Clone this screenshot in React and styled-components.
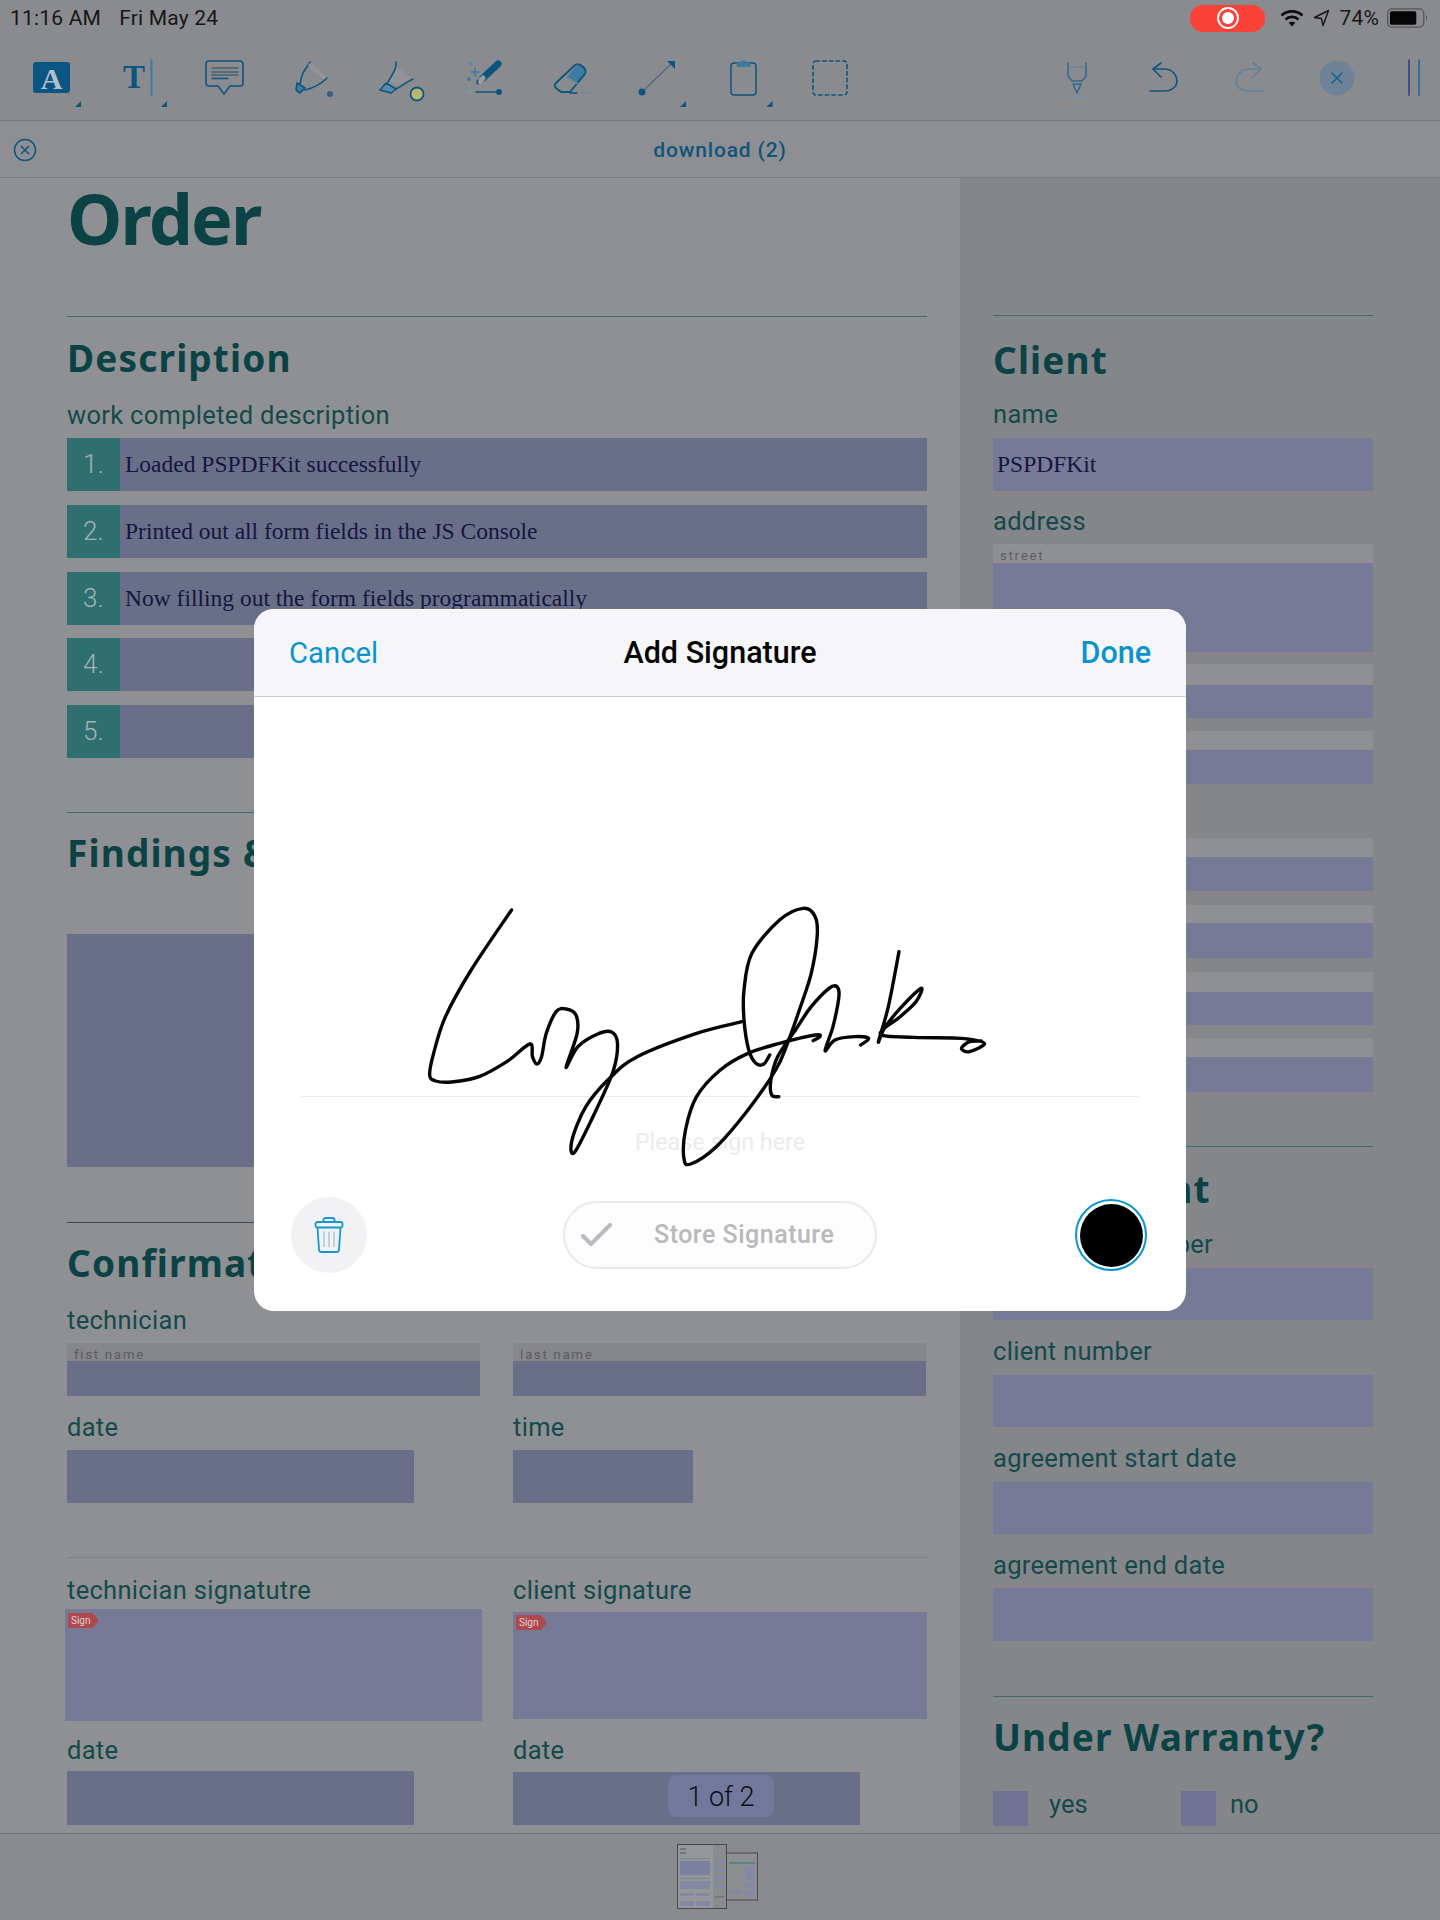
import React from 'react';
import styled, { createGlobalStyle } from 'styled-components';

const SANS = '"Roboto", "Liberation Sans", sans-serif';
const BOLD = '"Noto Sans", "Roboto", sans-serif';
const SERIF = '"Liberation Serif", serif';
const ICON = '#0c5680';
const HEAD = '#0b4345';
const LABEL = '#144a4c';

const Global = createGlobalStyle`
  html, body { margin: 0; padding: 0; background: #8f9093; font-family: ${SANS}; }
  * { box-sizing: border-box; }
`;

const Page = styled.div`
  position: relative; width: 1440px; height: 1920px; overflow: hidden;
  display: flex; flex-direction: column; background: #8f9093;
`;
const Header = styled.header`
  background: #8a8b8f; border-bottom: 1px solid #77787b; height: 121px; flex: none;
  position: relative; z-index: 1;
`;
const StatusBar = styled.div`
  height: 36px; display: flex; justify-content: space-between; align-items: center;
  padding: 0 12px 0 10px; font-size: 21px; color: #161618; letter-spacing: 0.2px;
`;
const StatusGroup = styled.div`display: flex; align-items: center; gap: ${p => p.$gap ?? 18}px;`;
const RecordPill = styled.div`
  width: 75px; height: 27px; margin-right: 15px; border-radius: 13px; background: #fa4238;
  display: flex; align-items: center; justify-content: center;
`;
const LocationSlot = styled.span`display: flex; margin-left: 9px;`;
const BatteryText = styled.span`font-size: 21px; margin: 0 8px 0 9px;`;

const Toolbar = styled.div`
  height: 84px; display: flex; justify-content: space-between; padding: 0 0 0 8px;
`;
const ToolGroup = styled.div`display: flex;`;
const Tool = styled.div`
  position: relative; width: ${p => p.$w || 86.5}px; height: 84px; flex: none;
  display: flex; align-items: center; justify-content: center;
  svg { overflow: visible; }
`;
const Corner = styled.span`
  position: absolute; left: ${p => p.$x}px; top: 65px; width: 6px; height: 6px;
  background: ${ICON}; clip-path: polygon(100% 0, 100% 100%, 0 100%);
`;

const TitleBar = styled.div`
  height: 57px; flex: none; background: #8e8f93; border-bottom: 1px solid #7b7c80;
  display: flex; align-items: center; justify-content: center; position: relative;
  color: #0f5479; font-size: 21px; font-weight: 500; letter-spacing: 0.85px; padding-top: 2px;
`;
const TitleClose = styled.span`position: absolute; left: 13px; top: 17px; display: flex;`;

const Doc = styled.main`height: 1655px; flex: none; display: flex;`;
const LeftCol = styled.section`width: 960px; padding: 0 33px 0 67px;`;
const RightCol = styled.section`width: 480px; background: #85868a; padding: 137px 67px 0 33px;`;

const Title = styled.h1`
  margin: 0; font: 700 70px/80px ${BOLD}; color: ${HEAD}; letter-spacing: -1.8px;
`;
const Rule = styled.hr`
  border: 0; height: 1px; margin: ${p => p.$mt}px 0 0;
  background: ${p => p.$c || '#43696b'};
`;
const Heading = styled.h2`
  margin: ${p => p.$mt - 1}px 0 0; padding-bottom: 1px; font: 700 37px/44px ${BOLD}; color: ${HEAD};
  letter-spacing: ${p => p.$ls ?? 1.15}px; white-space: nowrap;
`;
const Label = styled.div`
  margin-top: ${p => p.$mt}px; font: 400 25.5px/30px ${SANS}; color: ${LABEL}; white-space: nowrap;
  letter-spacing: 0.3px;
`;
const Rows = styled.div`display: flex; flex-direction: column; gap: 13.75px; margin-top: 8px;`;
const Row = styled.div`display: flex; height: 53px; background: #6a6f89;`;
const Num = styled.div`
  width: 53px; flex: none; background: #306f70; color: #a3b4b4; font: 300 26px/53px ${SANS};
  padding-left: 16px;
`;
const SerifText = styled.div`
  font: 400 23.5px/53px ${SERIF}; color: #14163e; padding-left: ${p => p.$pl || 5}px; white-space: nowrap;
`;
const Field = styled.div`
  height: ${p => p.$h}px; width: ${p => (p.$w ? p.$w + 'px' : 'auto')};
  margin-top: ${p => p.$mt || 0}px; background: ${p => p.$bg || '#6a6f89'};
`;
const Band = styled.div`
  height: ${p => p.$h}px; margin-top: ${p => p.$mt || 0}px; background: ${p => p.$bg};
  font: 400 13.5px/${p => p.$h + p.$drop}px ${SANS}; letter-spacing: 1.6px; color: #5c5d60; padding-left: 7px;
`;
const Cols = styled.div`
  display: grid; grid-template-columns: 413px 413px; column-gap: 33px; align-items: start;
`;
const SigBox = styled.div`
  position: relative; background: #767a96;
  height: ${p => p.$h}px; margin-top: ${p => p.$mt}px; margin-left: ${p => p.$ml || 0}px;
  width: ${p => p.$w}px;
`;
const SignTag = styled.span`
  position: absolute; left: ${p => p.$l}px; top: ${p => p.$t}px; width: 31px; height: 15px;
  background: #ae4a4e; color: #dccfd2; font: 400 10px/15px ${SANS}; padding-left: 3px;
  clip-path: polygon(0 0, 80% 0, 100% 50%, 80% 100%, 0 100%);
`;
const PageLabel = styled.div`
  position: absolute; left: 668px; top: 1775px; width: 106px; height: 42px; border-radius: 8px;
  background: #72789b; color: #0c0d14; font: 300 27px/44px ${SANS}; text-align: center;
`;
const Options = styled.div`display: flex; align-items: flex-start; margin-top: 31px;`;
const CheckBox = styled.div`width: 35px; height: 35px; background: #6f7391; flex: none;`;
const OptText = styled.span`
  font: 400 25.5px/30px ${SANS}; color: ${LABEL}; margin: -2px 0 0 ${p => p.$ml}px; width: ${p => p.$w}px;
`;

const BottomBar = styled.footer`
  flex: 1; background: #8a8b8e; border-top: 1px solid #727376; position: relative;
  display: flex; justify-content: center; padding-top: 10px; padding-right: 5px;
`;

const Modal = styled.div`
  position: absolute; left: 254px; top: 609px; width: 932px; height: 702px;
  border-radius: 20px; background: #fff; overflow: hidden; display: flex; flex-direction: column;
`;
const ModalHead = styled.div`
  height: 88px; flex: none; background: #f6f6f8; border-bottom: 1px solid #c9c9cc;
  display: flex; align-items: center; justify-content: space-between; padding: 0 35px;
  position: relative;
`;
const HeadButton = styled.span`
  font: ${p => (p.$bold ? 500 : 400)} ${p => (p.$bold ? 30.5 : 29.3)}px/34px ${SANS}; color: #0a93cd;
`;
const ModalTitle = styled.span`
  position: absolute; left: 0; right: 0; text-align: center;
  font: 500 30.5px/34px ${SANS}; color: #050505;
`;
const Canvas = styled.div`position: relative; height: 483px; flex: none; padding: 399px 47px 0;`;
const SignLine = styled.div`height: 1px; background: #ececef;`;
const Hint = styled.div`
  margin-top: 30px; text-align: center; font: 400 23.3px/30px ${SANS}; color: #ebebee;
`;
const Signature = styled.svg`position: absolute; left: 146px; top: 183px; overflow: visible;`;
const ModalFoot = styled.div`
  height: 110px; flex: none; display: flex; align-items: center; justify-content: space-between;
  padding: 0 39px 0 37px;
`;
const TrashBtn = styled.button`
  width: 76px; height: 76px; border-radius: 50%; background: #f2f2f4; border: 0; padding: 0;
  display: flex; align-items: center; justify-content: center;
`;
const StoreBtn = styled.button`
  width: 314px; height: 68px; margin-right: 2px; border-radius: 34px; background: #fdfcfe; border: 2px solid #e9e9eb;
  display: flex; align-items: center; padding: 0 0 0 16px; gap: 41px;
  font: 500 25px/30px ${SANS}; color: #b9b9bc; letter-spacing: 0.5px;
`;
const Swatch = styled.div`
  width: 72px; height: 72px; border-radius: 50%; border: 2px solid #0a95cf; background: #fff;
  display: flex; align-items: center; justify-content: center;
`;
const SwatchInner = styled.div`width: 63px; height: 63px; border-radius: 50%; background: #000;`;

/* smooth path through points */
const smooth = pts => {
  let d = `M${pts[0][0]} ${pts[0][1]}`;
  for (let i = 0; i < pts.length - 1; i++) {
    const p0 = pts[i - 1] || pts[i], p1 = pts[i], p2 = pts[i + 1], p3 = pts[i + 2] || p2;
    const c1 = [p1[0] + (p2[0] - p0[0]) / 6, p1[1] + (p2[1] - p0[1]) / 6];
    const c2 = [p2[0] - (p3[0] - p1[0]) / 6, p2[1] - (p3[1] - p1[1]) / 6];
    d += ` C${c1[0].toFixed(1)} ${c1[1].toFixed(1)} ${c2[0].toFixed(1)} ${c2[1].toFixed(1)} ${p2[0]} ${p2[1]}`;
  }
  return d;
};
const STROKES = [
  [[282,90],[180,270],[115,410],[85,520],[75,585],[90,603],[130,606],[200,590],[270,545],[328,492],[335,530],[346,552],[358,530],[370,460],[395,395],[420,387],[445,405],[448,460],[420,562],[450,500],[500,462],[535,456],[550,490],[540,570],[500,680],[442,816],[435,780],[470,680],[530,595],[600,530],[750,460],[865,425]],
  [[935,525],[920,552],[900,550],[882,510],[870,420],[870,330],[890,220],[960,120],[1020,85],[1050,110],[1055,170],[1040,280],[1010,390],[980,490],[950,570],[880,690],[800,800],[735,852],[718,835],[722,750],[750,650],[810,570],[880,520],[960,490],[1050,465],[1062,470],[1045,482]],
  [[1000,450],[1040,380],[1085,325],[1105,320],[1110,350],[1095,440],[1075,512],[1100,480],[1150,470],[1185,475],[1165,495]],
  [[1000,450],[955,530],[938,600],[940,645],[958,650]],
  [[1262,215],[1235,380],[1210,485],[1225,445],[1265,385],[1318,325],[1305,365],[1265,410],[1215,462],[1300,472],[1420,475],[1478,490],[1440,515],[1420,505],[1440,485],[1470,483]],
];

const Svg = ({ children, w = 50, h = 50 }) => (
  <svg width={w} height={h} viewBox={`0 0 ${w} ${h}`} fill="none" stroke={ICON} strokeWidth="1.6" strokeLinecap="round" strokeLinejoin="round">{children}</svg>
);

const IconA = () => (
  <Svg>
    <rect x="7" y="9" width="37" height="31" rx="3" fill="#0a5582" stroke="none" />
    <text x="25.5" y="36" textAnchor="middle" fontFamily="Liberation Serif" fontWeight="700" fontSize="30" fill="#b0c0ca" stroke="none">A</text>
  </Svg>
);
const IconT = () => (
  <Svg>
    <text x="21" y="35" textAnchor="middle" fontFamily="Liberation Serif" fontWeight="700" fontSize="33" fill="#0a5582" stroke="none">T</text>
    <path d="M38.5 7V42" stroke="#3f7a9e" strokeWidth="2" />
  </Svg>
);
const IconComment = () => (
  <Svg>
    <path d="M10 8H41a3 3 0 0 1 3 3V30a3 3 0 0 1-3 3H31L25 41L19 33H10a3 3 0 0 1-3-3V11a3 3 0 0 1 3-3Z" />
    <path d="M13 15H39M13 19H39M13 22H39" stroke="#44606f" strokeWidth="1.3" />
    <path d="M13 25.5H29" strokeWidth="1.3" />
  </Svg>
);
const IconInk = () => (
  <Svg>
    <path d="M24 9L17 20C15 24 15 27 14 31" />
    <path d="M41 25C36 30 28 35 19 37" />
    <path d="M24 12L38 24" stroke="#9a9ca3" strokeWidth="4" opacity="0.6" />
    <path d="M11 30L19 35L14 40L10 37Z" fill="#3f7a9e" />
    <circle cx="44" cy="41" r="3" fill="#1c6490" stroke="none" />
    <circle cx="44" cy="41" r="1.2" fill="#b3404c" stroke="none" />
  </Svg>
);
const IconHighlighter = () => (
  <Svg>
    <path d="M26 32L41 26L24 13L16 27Z" fill="#9a9ca3" opacity="0.5" stroke="none" />
    <path d="M24 9C25 14 22 19 16 29" />
    <path d="M41 26C34 29 32 32 24 36" />
    <path d="M8 37L14 30L24 36L19 40Z" fill="#5a8ca9" />
    <circle cx="45" cy="41" r="6.5" fill="#bcb56e" strokeWidth="1.8" />
  </Svg>
);
const IconMagic = () => (
  <Svg>
    <path d="M39 11L24 25" stroke="#0a5582" strokeWidth="7" />
    <path d="M24 25L20 29" stroke="#9a9ca3" strokeWidth="5" />
    <path d="M19 31a3 3 0 0 1 0-4" />
    <circle cx="12" cy="11" r="2" fill="#5a8ca9" stroke="none" />
    <path d="M16 15V23M12 19H20" stroke="#3f7a9e" strokeWidth="1.6" />
    <circle cx="10" cy="26" r="2" fill="#3f7a9e" stroke="none" />
    <circle cx="11" cy="39" r="3" fill="#7c94a8" stroke="none" />
    <path d="M17 39H37" />
    <circle cx="40" cy="39" r="3" fill="#0a5582" stroke="none" />
  </Svg>
);
const IconEraser = () => (
  <Svg>
    <path d="M22 24L31 13C33 11 35 11 37 13L40 16C41 18 41 19 40 21L33 31Z" fill="#3d7ba0" stroke="none" />
    <path d="M30 12C33 10 35 11 38 14L40 16C41 18 41 19 40 21L25 39H16L11 35C9 33 9 32 11 30Z" strokeWidth="1.9" />
    <path d="M22 24L33 31" stroke="#6d8698" />
    <path d="M25 40H32" strokeWidth="1.6" />
    <path d="M37 40H39M43 40H45" stroke="#6d8698" />
  </Svg>
);
const IconLine = () => (
  <Svg>
    <path d="M13 36L39 11" stroke="#4f6d83" strokeWidth="1.5" />
    <circle cx="10" cy="39" r="3.5" fill="#0a5582" stroke="none" />
    <path d="M35 8H43V16Z" fill="#0a5582" stroke="none" />
  </Svg>
);
const IconClip = () => (
  <Svg>
    <rect x="13" y="10" width="25" height="32" rx="3" strokeWidth="1.5" />
    <path d="M19 13V10H23C23 7 28 7 28 10H32V13Z" fill="#3f7a9e" stroke="#3f7a9e" strokeWidth="1" />
  </Svg>
);
const IconSelect = () => (
  <Svg><rect x="8" y="8" width="34" height="34" rx="3" strokeDasharray="3.5 3.2" /></Svg>
);
const IconStylus = () => (
  <Svg>
    <path d="M16 10V22C16 25 19 26 20 28H30C31 26 34 25 34 22V10" stroke="#2f6a8c" />
    <path d="M16 14H34" stroke="#5f7f94" strokeWidth="1" />
    <path d="M21 31H29L25 40Z" stroke="#2f6a8c" />
    <path d="M15 44H35" stroke="#7c94a8" strokeWidth="1.5" />
  </Svg>
);
const IconUndo = () => (
  <Svg>
    <path d="M22 10L14 16L22 24" />
    <path d="M14 16H25C35 16 38 24 38 28C38 35 31 38 26 38H11" />
  </Svg>
);
const IconRedo = () => (
  <Svg>
    <g stroke="#5f8097">
      <path d="M28 10L36 16L28 24" />
      <path d="M36 16H25C15 16 11 24 11 28C11 35 18 38 24 38H38" />
    </g>
  </Svg>
);
const IconClose = () => (
  <Svg>
    <circle cx="25" cy="25" r="17.5" fill="#6f8398" stroke="none" />
    <path d="M20 20L30 30M30 20L20 30" stroke="#15628f" strokeWidth="1.5" />
  </Svg>
);
const IconToggle = () => (
  <Svg>
    <path d="M24 7V42" stroke="#39438a" strokeWidth="1.7" />
    <path d="M34 7V42" stroke="#1a6f9c" strokeWidth="1.7" />
  </Svg>
);
const CircleX = () => (
  <svg width="24" height="24" viewBox="0 0 24 24" fill="none" stroke={ICON} strokeWidth="1.5">
    <circle cx="12" cy="12" r="10.5" />
    <path d="M8 8L16 16M16 8L8 16" />
  </svg>
);
const RecordIcon = () => (
  <svg width="24" height="24" viewBox="0 0 24 24">
    <circle cx="12" cy="12" r="10" fill="none" stroke="#fff" strokeWidth="1.8" />
    <circle cx="12" cy="12" r="6" fill="#fff" />
  </svg>
);
const Wifi = () => (
  <svg width="24" height="18" viewBox="0 0 24 18" fill="none" stroke="#0c0c0e" strokeWidth="2.6">
    <path d="M1.500 6.500C7 1 17 1 22.500 6.500" />
    <path d="M5.500 10.500C9 7 15 7 18.500 10.500" />
    <path d="M12 17.500L8.700 13.800C10.500 12.300 13.500 12.300 15.300 13.800Z" fill="#0c0c0e" stroke="none" />
  </svg>
);
const Location = () => (
  <svg width="17" height="18" viewBox="0 0 17 18" fill="none" stroke="#161618" strokeWidth="1.4" strokeLinejoin="round">
    <path d="M15.500 1.500L1.500 8.500L8.500 9.500L10 16.500Z" />
  </svg>
);
const Battery = () => (
  <svg width="41" height="20" viewBox="0 0 42 20">
    <rect x="0.700" y="0.700" width="37" height="18.600" rx="4.500" fill="none" stroke="#55565a" strokeWidth="1.300" />
    <rect x="3" y="3" width="27" height="14" rx="2" fill="#050505" />
    <path d="M40 7C41.400 7.600 41.400 12.400 40 13Z" fill="#55565a" />
  </svg>
);
const Trash = () => (
  <svg width="30" height="36" viewBox="0 0 30 36" fill="none" stroke="#1a96cf" strokeWidth="1.800" strokeLinejoin="round">
    <path d="M9.500 5V3C9.500 1.600 10.500 1 11.500 1H18.500C19.500 1 20.500 1.600 20.500 3V5" />
    <rect x="1.500" y="5" width="27" height="5.500" rx="2" />
    <path d="M3.500 10.500L5 32.500C5 34 6 35 7.500 35H22.500C24 35 25 34 25 32.500L26.500 10.500" />
    <path d="M10 14.500V30M15 14.500V30M20 14.500V30" stroke="#a9c9da" strokeWidth="1.500" />
  </svg>
);
const Check = () => (
  <svg width="32" height="24" viewBox="0 0 32 24" fill="none" stroke="#bbbbbe" strokeWidth="4" strokeLinecap="round" strokeLinejoin="round">
    <path d="M2 13L10 21L29 2" />
  </svg>
);
const Thumb = () => (
  <svg width="81" height="65" viewBox="0 0 81 65">
    <rect x="49" y="9" width="31.500" height="47" fill="#8d8e92" stroke="#48494d" />
    <rect x="52" y="18" width="26" height="2" fill="#5f8280" />
    <rect x="68" y="22" width="10" height="14" fill="#8388a4" />
    <rect x="68" y="38" width="10" height="6" fill="#8388a4" />
    <rect x="68" y="46" width="10" height="6" fill="#8388a4" />
    <rect x="52" y="46" width="12" height="3" fill="#8388a4" />
    <rect x="0.500" y="0.500" width="49" height="64" fill="#96979a" stroke="#48494d" />
    <rect x="36" y="1" width="13" height="63" fill="#8b8c90" />
    <rect x="3" y="4" width="6" height="2" fill="#76777b" />
    <rect x="3" y="8" width="6" height="2" fill="#76777b" />
    <rect x="3" y="14" width="30" height="1" fill="#7a8a8a" />
    <rect x="3" y="17" width="30" height="14" fill="#7b80a0" />
    <rect x="3" y="34" width="30" height="1" fill="#7a8a8a" />
    <rect x="3" y="37" width="30" height="8" fill="#8388a4" />
    <rect x="3" y="49" width="14" height="3" fill="#8388a4" />
    <rect x="19" y="49" width="14" height="3" fill="#8388a4" />
    <rect x="3" y="57" width="14" height="5" fill="#8388a4" />
    <rect x="19" y="57" width="14" height="5" fill="#8388a4" />
    <rect x="38" y="16" width="9" height="4" fill="#8388a4" />
    <rect x="38" y="24" width="9" height="4" fill="#8388a4" />
    <rect x="38" y="32" width="9" height="4" fill="#8388a4" />
    <rect x="38" y="40" width="9" height="4" fill="#8388a4" />
    <rect x="38" y="52" width="9" height="2" fill="#76777b" />
  </svg>
);

const Lb = '#86878a';
const Rb = '#8f9093';
const Rf = '#767a96';

export default function App() {
  return (
    <Page>
      <Global />
      <Header>
        <StatusBar>
          <StatusGroup>
            <span>11:16 AM</span>
            <span>Fri May 24</span>
          </StatusGroup>
          <StatusGroup $gap={0}>
            <RecordPill><RecordIcon /></RecordPill>
            <Wifi />
            <LocationSlot><Location /></LocationSlot>
            <BatteryText>74%</BatteryText>
            <Battery />
          </StatusGroup>
        </StatusBar>
        <Toolbar>
          <ToolGroup>
            <Tool><IconA /><Corner $x={67} /></Tool>
            <Tool><IconT /><Corner $x={66.5} /></Tool>
            <Tool><IconComment /></Tool>
            <Tool><IconInk /></Tool>
            <Tool><IconHighlighter /></Tool>
            <Tool><IconMagic /></Tool>
            <Tool><IconEraser /></Tool>
            <Tool><IconLine /><Corner $x={66.5} /></Tool>
            <Tool><IconClip /><Corner $x={66.5} /></Tool>
            <Tool><IconSelect /></Tool>
          </ToolGroup>
          <ToolGroup>
            <Tool><IconStylus /></Tool>
            <Tool><IconUndo /></Tool>
            <Tool><IconRedo /></Tool>
            <Tool><IconClose /></Tool>
            <Tool $w={60}><IconToggle /></Tool>
          </ToolGroup>
        </Toolbar>
      </Header>
      <TitleBar>
        <TitleClose><CircleX /></TitleClose>
        download (2)
      </TitleBar>
      <Doc>
        <LeftCol>
          <Title>Order</Title>
          <Rule $mt={58} />
          <Heading $mt={20}>Description</Heading>
          <Label $mt={19}>work completed description</Label>
          <Rows>
            <Row><Num>1.</Num><SerifText>Loaded PSPDFKit successfully</SerifText></Row>
            <Row><Num>2.</Num><SerifText>Printed out all form fields in the JS Console</SerifText></Row>
            <Row><Num>3.</Num><SerifText>Now filling out the form fields programmatically</SerifText></Row>
            <Row><Num>4.</Num></Row>
            <Row><Num>5.</Num></Row>
          </Rows>
          <Rule $mt={54} />
          <Heading $mt={19}>Findings &amp; Recommendations</Heading>
          <Field $h={233} $mt={58} />
          <Rule $mt={55} $c="#3e4b4d" />
          <Heading $mt={19}>Confirmation</Heading>
          <Label $mt={19}>technician</Label>
          <Cols>
            <div>
              <Band $h={18} $mt={8} $bg={Lb} $drop={5}>fist name</Band>
              <Field $h={35} />
              <Label $mt={16}>date</Label>
              <Field $h={53} $w={347} $mt={8} />
            </div>
            <div>
              <Band $h={18} $mt={8} $bg={Lb} $drop={5}>last name</Band>
              <Field $h={35} />
              <Label $mt={16}>time</Label>
              <Field $h={53} $w={180} $mt={8} />
            </div>
          </Cols>
          <Rule $mt={54} $c="#808386" />
          <Cols>
            <div>
              <Label $mt={17}>technician signatutre</Label>
              <SigBox $h={112} $mt={4} $ml={-2} $w={417}><SignTag $l={3} $t={4}>Sign</SignTag></SigBox>
              <Label $mt={14}>date</Label>
              <Field $h={54} $w={347} $mt={6} />
            </div>
            <div>
              <Label $mt={17}>client signature</Label>
              <SigBox $h={107} $mt={7} $w={414}><SignTag $l={3} $t={3}>Sign</SignTag></SigBox>
              <Label $mt={16}>date</Label>
              <Field $h={53} $w={347} $mt={7} />
            </div>
          </Cols>
        </LeftCol>
        <RightCol>
          <Rule $mt={0} />
          <Heading $mt={23}>Client</Heading>
          <Label $mt={16}>name</Label>
          <Field $h={53} $mt={9} $bg={Rf}><SerifText $pl={4}>PSPDFKit</SerifText></Field>
          <Label $mt={15}>address</Label>
          <Band $h={19} $mt={8} $bg={Rb} $drop={3}>street</Band>
          <Field $h={89} $bg={Rf} />
          <Band $h={21} $mt={12} $bg={Rb} $drop={0} />
          <Field $h={33} $bg={Rf} />
          <Band $h={19} $mt={13} $bg={Rb} $drop={0} />
          <Field $h={34} $bg={Rf} />
          <Band $h={19} $mt={54} $bg={Rb} $drop={0} />
          <Field $h={34} $bg={Rf} />
          <Band $h={18} $mt={14} $bg={Rb} $drop={0} />
          <Field $h={35} $bg={Rf} />
          <Band $h={20} $mt={14} $bg={Rb} $drop={0} />
          <Field $h={33} $bg={Rf} />
          <Band $h={19} $mt={13} $bg={Rb} $drop={0} />
          <Field $h={35} $bg={Rf} />
          <Rule $mt={54} />
          <Heading $mt={21}>Agreement</Heading>
          <Label $mt={17}>agreement number</Label>
          <Field $h={52} $mt={9} $bg={Rf} />
          <Label $mt={16}>client number</Label>
          <Field $h={52} $mt={9} $bg={Rf} />
          <Label $mt={16}>agreement start date</Label>
          <Field $h={52} $mt={9} $bg={Rf} />
          <Label $mt={16}>agreement end date</Label>
          <Field $h={53} $mt={8} $bg={Rf} />
          <Rule $mt={55} />
          <Heading $mt={19}>Under Warranty?</Heading>
          <Options>
            <CheckBox />
            <OptText $ml={21} $w={132}>yes</OptText>
            <CheckBox />
            <OptText $ml={14} $w={40}>no</OptText>
          </Options>
        </RightCol>
      </Doc>
      <BottomBar><Thumb /></BottomBar>
      <PageLabel>1 of 2</PageLabel>
      <Modal>
        <ModalHead>
          <HeadButton>Cancel</HeadButton>
          <ModalTitle>Add Signature</ModalTitle>
          <HeadButton $bold>Done</HeadButton>
        </ModalHead>
        <Canvas>
          <SignLine />
          <Hint>Please sign here</Hint>
          <Signature width="620" height="300" viewBox="0 0 1568 900" preserveAspectRatio="none" fill="none" stroke="#060606" strokeLinecap="round" strokeLinejoin="round">
            {STROKES.map((s, i) => (
              <path key={i} d={smooth(s)} strokeWidth="3.4" vectorEffect="non-scaling-stroke" />
            ))}
          </Signature>
        </Canvas>
        <ModalFoot>
          <TrashBtn><Trash /></TrashBtn>
          <StoreBtn><Check /><span>Store Signature</span></StoreBtn>
          <Swatch><SwatchInner /></Swatch>
        </ModalFoot>
      </Modal>
    </Page>
  );
}
